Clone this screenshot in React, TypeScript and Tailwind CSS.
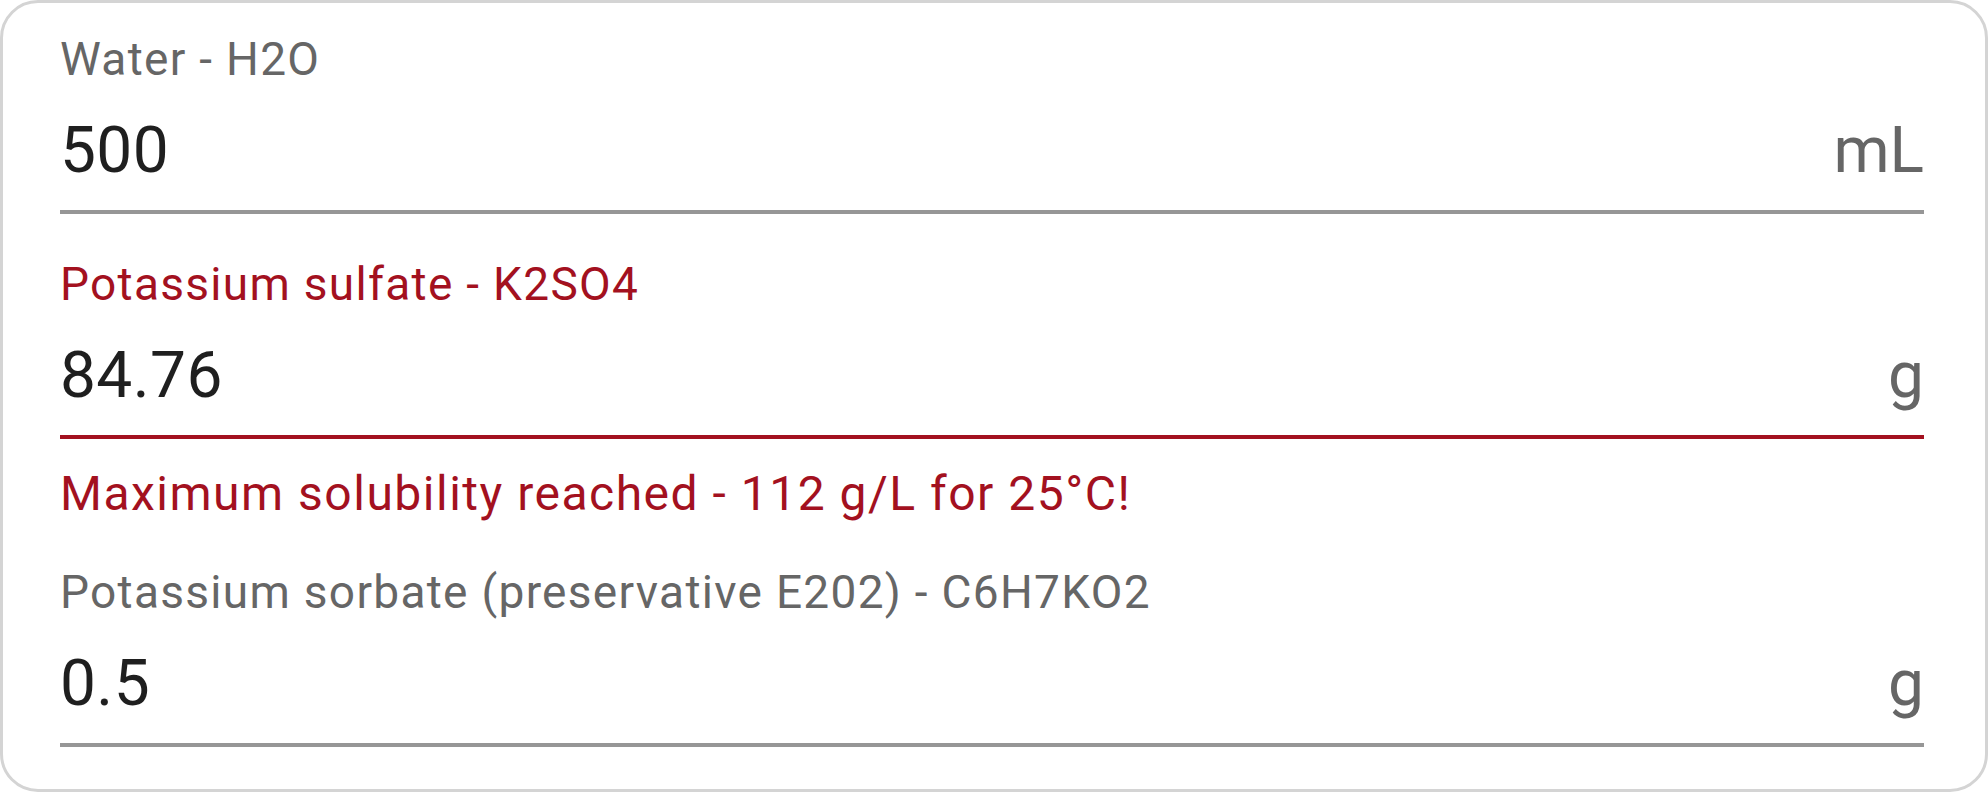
import React from "react";

const RED = "text-[#a3111f]";

function Field({
  label,
  value,
  unit,
  error,
  helper,
  labelMt,
}: {
  label: string;
  value: string;
  unit: string;
  error?: boolean;
  helper?: string;
  labelMt: string;
}) {
  return (
    <div className="flex flex-col">
      <div
        className={`${labelMt} text-[46px] leading-[54px] tracking-[1.3px] ${error ? RED : "text-[#666666]"}`}
      >
        {label}
      </div>
      <div className="mt-[27px] flex items-baseline justify-between">
        <span className="text-[64px] leading-[76px] tracking-[0.4px] text-[#1f1f1f]">{value}</span>
        <span className="text-[64px] leading-[76px] text-[#666666]">{unit}</span>
      </div>
      <div
        className={`mt-[21px] h-[4px] w-full ${error ? "bg-[#a3111f]" : "bg-[#969696]"}`}
      />
      {helper && (
        <div className={`mt-[28px] text-[48px] leading-[54px] tracking-[1.5px] ${RED}`}>{helper}</div>
      )}
    </div>
  );
}

export default function App() {
  return (
    <div
      className="w-[1988px] h-[792px] bg-white"
      style={{ fontFamily: "Roboto, 'Liberation Sans', sans-serif" }}
    >
      <div className="box-border h-[792px] w-[1988px] rounded-[38px] border-[3px] border-[#d4d4d4] bg-white pl-[57px] pr-[61px] pt-[29px]">
        <Field label="Water - H2O" value="500" unit="mL" labelMt="mt-0" />
        <Field
          label="Potassium sulfate - K2SO4"
          value="84.76"
          unit="g"
          error
          helper="Maximum solubility reached - 112 g/L for 25°C!"
          labelMt="mt-[43px]"
        />
        <Field
          label="Potassium sorbate (preservative E202) - C6H7KO2"
          value="0.5"
          unit="g"
          labelMt="mt-[44px]"
        />
      </div>
    </div>
  );
}
